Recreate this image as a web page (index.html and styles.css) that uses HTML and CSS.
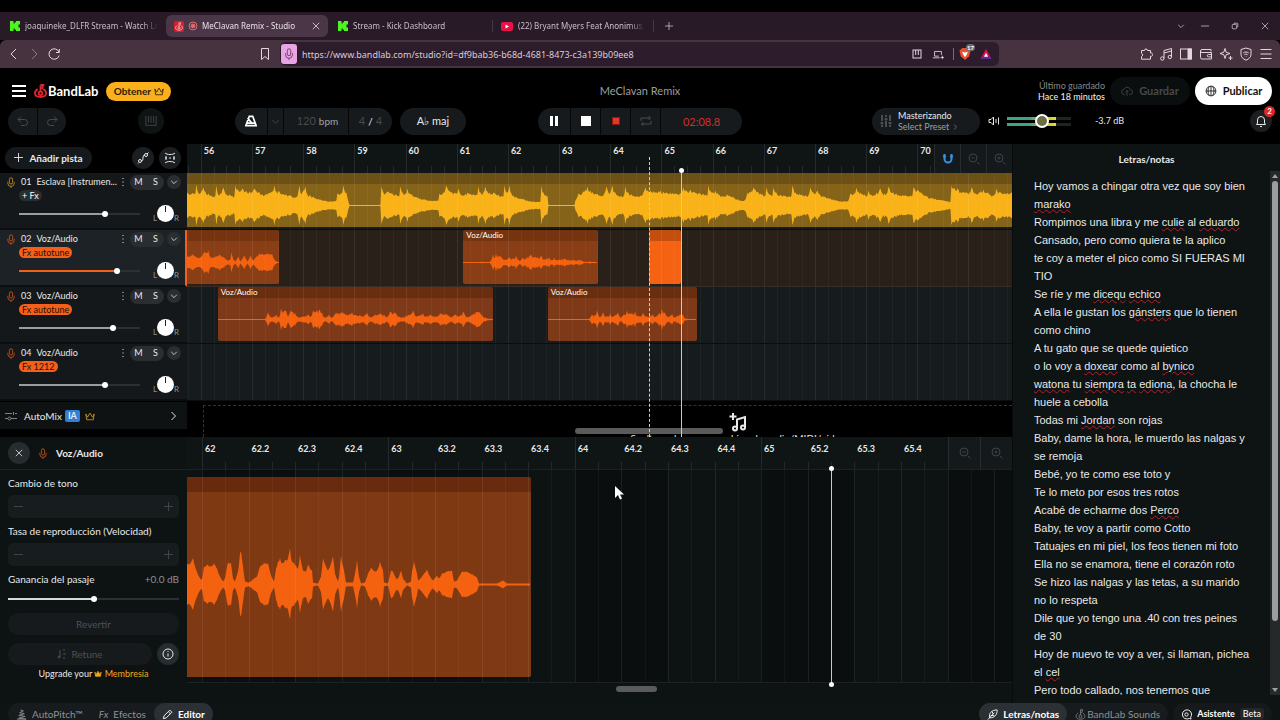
FILE: index.html
```html
<!DOCTYPE html>
<html lang="es">
<head>
    <meta charset="utf-8">
    <title>MeClavan Remix - Studio</title>
    <link rel="stylesheet" href="styles.css">
</head>
<body>
    <!-- shared icons -->
    <svg class="defs" aria-hidden="true">
        <symbol id="i-mic" viewBox="0 0 10 14"><rect x="3" y="1" width="4" height="8" rx="2"/><path d="M1 6v2a4 4 0 0 0 8 0V6M5 12v2"/></symbol>
        <symbol id="i-down" viewBox="0 0 10 10"><path d="M1.500 3.500 5 7l3.500-3.500"/></symbol>
        <symbol id="i-right" viewBox="0 0 10 10"><path d="M3.500 1 7.500 5l-4 4"/></symbol>
        <symbol id="i-dots" viewBox="0 0 4 10"><path d="M2 1v1M2 4.500v1M2 8v1"/></symbol>
        <symbol id="i-plus" viewBox="0 0 10 10"><path d="M5 0v10M0 5h10"/></symbol>
        <symbol id="i-minus" viewBox="0 0 10 10"><path d="M0 5h10"/></symbol>
        <symbol id="i-x" viewBox="0 0 10 10"><path d="M1 1l8 8M9 1 1 9"/></symbol>
        <symbol id="i-zoomout" viewBox="0 0 12 12"><circle cx="5" cy="5" r="4"/><path d="M3.500 5h3M9 9l2.500 2.500"/></symbol>
        <symbol id="i-zoomin" viewBox="0 0 12 12"><circle cx="5" cy="5" r="4"/><path d="M3.500 5h3M5 3.500v3M9 9l2.500 2.500"/></symbol>
        <symbol id="i-crown" viewBox="0 0 12 11"><path d="M1 3l2 4 3-5 3 5 2-4-1 7H2z"/></symbol>
        <symbol id="i-flame" viewBox="0 0 14 15"><path d="M7 1h3L8.500 5.500M7 1v7M4 5.500C2.300 6.500 1 8 1 10c0 2.500 2 4 6 4s6-1.500 6-4c0-2-1.300-3.500-3-4.500"/><circle cx="7" cy="10" r="2"/></symbol>
        <symbol id="i-kick" viewBox="0 0 10 10"><path d="M0 0h3.500v2.500h1.200V1.200H6V0h4v3.500H8.500v3H10V10H6V8.800H4.700V7.500H3.500V10H0z"/></symbol>
    </svg>

    <div class="tabs">
        <div class="tab">
            <svg class="kick"><use href="#i-kick"/></svg>
            <span class="tab-title">joaquineke_DLFR Stream - Watch Liv</span>
        </div>
        <div class="tab active">
            <span class="fav"><svg class="ic"><use href="#i-flame"/></svg></span>
            <svg class="rec" viewBox="0 0 10 10"><circle cx="5" cy="5" r="4"/><circle class="dot" cx="5" cy="5" r="2"/></svg>
            <span class="tab-title">MeClavan Remix - Studio</span>
            <button class="tab-close" aria-label="Cerrar"><svg class="ic"><use href="#i-x"/></svg></button>
        </div>
        <div class="tab">
            <svg class="kick"><use href="#i-kick"/></svg>
            <span class="tab-title">Stream - Kick Dashboard</span>
        </div>
        <div class="tab ruled">
            <svg class="yt" viewBox="0 0 12 9"><rect width="12" height="9" rx="2"/><path d="M4.500 2.500v4l3.500-2z"/></svg>
            <span class="tab-title">(22) Bryant Myers Feat Anonimus, An</span>
        </div>
        <button class="new-tab" aria-label="Nueva"><svg class="ic"><use href="#i-plus"/></svg></button>
        <div class="win">
            <svg class="ic"><use href="#i-down"/></svg>
            <svg class="ic"><use href="#i-minus"/></svg>
            <svg class="ic" viewBox="0 0 10 10"><rect x="1.500" y="3" width="5.500" height="5.500" rx="1"/><path d="M3.500 3V2.500a1 1 0 0 1 1-1h3a1 1 0 0 1 1 1v3a1 1 0 0 1-1 1H7"/></svg>
            <svg class="ic"><use href="#i-x"/></svg>
        </div>
    </div>

    <div class="toolbar">
        <div class="nav">
            <svg viewBox="0 0 14 14"><path d="M9 2 4 7l5 5"/></svg>
            <svg class="off" viewBox="0 0 14 14"><path d="M5 2l5 5-5 5"/></svg>
            <svg viewBox="0 0 14 14"><path d="M12 5A5.200 5.200 0 1 0 12.200 8.500M12.300 2v3.500H9"/></svg>
        </div>
        <svg class="bookmark" viewBox="0 0 10 14"><path d="M1.500 1.500h7v11L5 9.500l-3.500 3z"/></svg>
        <div class="url">
            <span class="mic-badge"><svg><use href="#i-mic"/></svg></span>
            <input type="text" aria-label="Dirección" value="https://www.bandlab.com/studio?id=df9bab36-b68d-4681-8473-c3a139b09ee8">
            <svg viewBox="0 0 12 12"><rect x="2" y="2" width="8" height="8"/><path d="M4.700 2v5M7.300 2v5"/></svg>
            <svg viewBox="0 0 14 12"><path d="M8 8.500H3V3h8v4M1 10.500h8M12 8v4M10 10h4"/></svg>
            <i></i>
            <span class="brave">
                <svg viewBox="0 0 12 13"><path class="lion" d="M3 0h6l3 3-1.500 6L6 13 1.500 9 0 3z"/><path class="face" d="M3 4l3 1 3-1-1 3-2 3-2-3z"/></svg>
                <b>17</b>
            </span>
            <svg class="bat" viewBox="0 0 12 11"><path d="M6 0l6 11H0z"/><path class="low" d="M0 11h12L9 8H3z"/><path class="mid" d="M6 4.500 8.200 8.500H3.800z"/></svg>
        </div>
        <div class="ext">
            <svg viewBox="0 0 14 14"><path d="M3 3.500h2.500a1.500 1.500 0 1 1 3 0h3V6a1.700 1.700 0 1 1 0 3.200v3H2.500V9.500a1.700 1.700 0 0 0 0-3.200V3.500z"/></svg>
            <svg viewBox="0 0 14 14"><path d="M5 11.500V3.500l7.500-2v8.500M5 6l7.500-2"/><circle cx="3.300" cy="11.500" r="1.700"/><circle cx="10.800" cy="10" r="1.700"/></svg>
            <svg viewBox="0 0 14 14"><rect x="1.500" y="2" width="11" height="10"/><path class="solid" d="M9 2h3.500v10H9z"/></svg>
            <svg viewBox="0 0 14 14"><path d="M12 4.500V2.500H3a1.500 1.500 0 0 0 0 3h9.500V12H3a1.500 1.500 0 0 1-1.500-1.500V4M12.500 7.500h-3a1.200 1.200 0 0 0 0 2.400h3"/></svg>
            <svg viewBox="0 0 14 14"><path d="M6 1.500 7.200 5.300 11 6.500 7.200 7.700 6 11.500 4.800 7.700 1 6.500l3.800-1.200zM11.500 9v4M9.500 11h4"/></svg>
            <svg viewBox="0 0 14 14"><path d="M7 1l5 1.500v5c0 2.500-2 4.500-5 5.700-3-1.200-5-3.200-5-5.700v-5zM4.300 6c1.600-1.300 3.800-1.300 5.400 0M5.400 7.700c1-.7 2.200-.7 3.200 0M7 9v.5"/></svg>
            <svg viewBox="0 0 14 14"><path d="M1.500 2.500h11M1.500 7h11M1.500 11.500h11"/></svg>
        </div>
    </div>

    <header class="app-head">
        <div class="row">
            <div class="brand">
                <button class="bare menu" aria-label="Menú"><svg viewBox="0 0 14 12"><path d="M0 1h14M0 6h14M0 11h14"/></svg></button>
                <a class="logo" href="#"><svg><use href="#i-flame"/></svg>BandLab</a>
                <button class="get">Obtener <svg><use href="#i-crown"/></svg></button>
            </div>
            <h1>MeClavan Remix</h1>
            <div class="publish">
                <p class="saved">Último guardado<br><span>Hace 18 minutos</span></p>
                <button class="save" disabled><svg viewBox="0 0 14 12"><path d="M4.500 10H4a3 3 0 0 1-.5-6 4 4 0 0 1 7.500.5A2.700 2.700 0 0 1 10.500 10H9.500M7 11.500v-6M5 7.500l2-2 2 2"/></svg>Guardar</button>
                <button class="pub"><svg viewBox="0 0 14 14"><circle cx="7" cy="7" r="5.700"/><path d="M7 1.300v11.400M1.300 7h11.400M5 1.800c-2 3-2 7.400 0 10.400M9 1.800c2 3 2 7.400 0 10.400"/></svg>Publicar</button>
            </div>
        </div>
        <div class="row">
            <div class="left-tools">
                <div class="pill dim">
                    <button aria-label="Deshacer"><svg viewBox="0 0 12 12"><path d="M4 1.500 1 4.500l3 3M1 4.500h6.500a3 3 0 0 1 0 6H4"/></svg></button>
                    <button aria-label="Rehacer"><svg viewBox="0 0 12 12"><path d="M8 1.500l3 3-3 3M11 4.500H4.500a3 3 0 0 0 0 6H8"/></svg></button>
                </div>
                <button class="round keys dim" aria-label="Teclado"><svg viewBox="0 0 14 12"><path d="M1 0v11h12V0M4 0v8M7 0v8M10 0v8"/></svg></button>
                <div class="tempo">
                    <div class="pill">
                        <button class="metro" aria-label="Metrónomo"><svg viewBox="0 0 14 13"><path d="M5 1h4l4 11H1zM2.500 9h9M8 9 3 3"/></svg></button>
                        <button class="dim thin" aria-label="Opciones"><svg><use href="#i-down"/></svg></button>
                        <button class="bpm"><em>120</em> bpm</button>
                        <button class="sig"><em>4</em> / <em>4</em></button>
                    </div>
                    <button class="pill key">A♭ maj</button>
                </div>
            </div>
            <div class="pill transport">
                <button aria-label="Pausa"><svg class="fill" viewBox="0 0 12 12"><path d="M2 1h3v10H2zM7 1h3v10H7z"/></svg></button>
                <button aria-label="Detener"><svg class="fill" viewBox="0 0 12 12"><path d="M1 1h10v10H1z"/></svg></button>
                <button aria-label="Grabar"><span class="rec-dot"></span></button>
                <button class="dim" aria-label="Bucle"><svg viewBox="0 0 12 12"><path d="M1 6V3h9.500M8.500 1l2 2-2 2M11 6v3H1.500M3.500 7l-2 2 2 2"/></svg></button>
                <output>02:08.8</output>
            </div>
            <div class="right-tools">
                <div class="out">
                    <button class="pill master">
                        <svg viewBox="0 0 12 12"><path d="M2 0v6M2 9.500V12M6 0v2M6 5.500V12M10 0v6M10 9.500V12M.5 8h3M4.500 4h3M8.500 8h3"/></svg>
                        <span>Masterizando<small>Select Preset <svg><use href="#i-right"/></svg></small></span>
                    </button>
                    <svg class="spk" viewBox="0 0 12 10"><path d="M1 3.500h2L5.500 1v8L3 6.500H1zM8 3v4M10.500 1.500v7"/></svg>
                    <input class="meter" type="range" aria-label="Volumen" value="56">
                    <span class="db">-3.7 dB</span>
                </div>
                <button class="round bell" aria-label="Avisos">
                    <svg viewBox="0 0 12 12"><path d="M1.500 9.500h9L9.500 8V5a3.500 3.500 0 0 0-7 0v3zM5 11.500h2"/></svg>
                    <b>2</b>
                </button>
            </div>
        </div>
    </header>

    <main>
        <div class="work">
            <section class="arrange">
                <div class="side">
                    <div class="side-head">
                        <button class="add"><svg><use href="#i-plus"/></svg>Añadir pista</button>
                        <button class="round" aria-label="Automatización"><svg viewBox="0 0 12 12"><circle cx="3" cy="9" r="1.500"/><circle cx="9" cy="3" r="1.500"/><path d="M4.500 9C7 9 5 3 7.500 3M1 11.500l1-1M10 2l1.500-1.500"/></svg></button>
                        <button class="round" aria-label="Ajustar"><svg viewBox="0 0 12 12"><path d="M1 1c2 2 8 2 10 0M1 11c2-2 8-2 10 0M1 6h2M5 6h2M9 6h2M2 4v4M10 4v4"/></svg></button>
                    </div>

                    <div class="track yellow">
                        <div class="line">
                            <svg class="mic"><use href="#i-mic"/></svg><span>01</span><span class="name">Esclava [Instrumen...</span>
                            <svg class="dots"><use href="#i-dots"/></svg>
                            <div class="ms"><button>M</button><button>S</button></div>
                            <button class="round" aria-label="Abrir"><svg><use href="#i-down"/></svg></button>
                        </div>
                        <button class="fx none">+ Fx</button>
                        <div class="line mix"><input type="range" aria-label="Volumen 01" value="72" style="--v: 71%"><span class="pan"><i></i></span></div>
                    </div>

                    <div class="track selected">
                        <div class="line">
                            <svg class="mic"><use href="#i-mic"/></svg><span>02</span><span class="name">Voz/Audio</span>
                            <svg class="dots"><use href="#i-dots"/></svg>
                            <div class="ms"><button>M</button><button>S</button></div>
                            <button class="round" aria-label="Abrir"><svg><use href="#i-down"/></svg></button>
                        </div>
                        <button class="fx">Fx autotune</button>
                        <div class="line mix"><input type="range" aria-label="Volumen 02" value="83" style="--v: 82%"><span class="pan"><i></i></span></div>
                    </div>

                    <div class="track">
                        <div class="line">
                            <svg class="mic"><use href="#i-mic"/></svg><span>03</span><span class="name">Voz/Audio</span>
                            <svg class="dots"><use href="#i-dots"/></svg>
                            <div class="ms"><button>M</button><button>S</button></div>
                            <button class="round" aria-label="Abrir"><svg><use href="#i-down"/></svg></button>
                        </div>
                        <button class="fx">Fx autotune</button>
                        <div class="line mix"><input type="range" aria-label="Volumen 03" value="79" style="--v: 78%"><span class="pan"><i></i></span></div>
                    </div>

                    <div class="track">
                        <div class="line">
                            <svg class="mic"><use href="#i-mic"/></svg><span>04</span><span class="name">Voz/Audio</span>
                            <svg class="dots"><use href="#i-dots"/></svg>
                            <div class="ms"><button>M</button><button>S</button></div>
                            <button class="round" aria-label="Abrir"><svg><use href="#i-down"/></svg></button>
                        </div>
                        <button class="fx">Fx 1212</button>
                        <div class="line mix"><input type="range" aria-label="Volumen 04" value="72" style="--v: 71%"><span class="pan"><i></i></span></div>
                    </div>

                    <button class="automix">
                        <svg class="sliders" viewBox="0 0 12 10"><path d="M0 2.500h7M10 2.500h2M0 7.500h3M6 7.500h6M8.500 1v3"/><circle cx="4.500" cy="7.500" r="1.500"/></svg>
                        AutoMix <b>IA</b>
                        <svg class="gold"><use href="#i-crown"/></svg>
                        <svg class="go"><use href="#i-right"/></svg>
                    </button>
                </div>

                <div class="timeline" id="arrange" data-start="55.73" data-span="16.12">
                    <div class="ruler"></div>
                    <div class="lane"><div class="clip gold" data-from="55" data-to="73" data-wave="beat"></div></div>
                    <div class="lane tinted">
                        <div class="clip" data-from="55" data-to="57.53" data-wave="voiceA"></div>
                        <div class="clip" data-from="61.13" data-to="63.77" data-wave="voiceB"><span>Voz/Audio</span></div>
                        <div class="clip recording" data-from="64.76" data-to="65.38"></div>
                    </div>
                    <div class="lane">
                        <div class="clip dark" data-from="56.33" data-to="61.71" data-wave="voiceC"><span>Voz/Audio</span></div>
                        <div class="clip dark" data-from="62.78" data-to="65.7" data-wave="voiceD"><span>Voz/Audio</span></div>
                    </div>
                    <div class="lane"></div>
                    <div class="drop">
                        <svg viewBox="0 0 18 19"><path d="M4 0v7M.5 3.500h7M8 15V6.500l8-2.500v10.500"/><circle cx="6" cy="15.500" r="2"/><circle cx="14" cy="14.500" r="2"/></svg>
                        <p>Suelta un loop o un archivo de audio/MIDI/video</p>
                    </div>
                    <div class="tools">
                        <button class="on" aria-label="Imán"><svg viewBox="0 0 12 12"><path d="M2.500 1v5a3.500 3.500 0 0 0 7 0V1M1 3.500h3M8 3.500h3"/></svg></button>
                        <button aria-label="Alejar"><svg><use href="#i-zoomout"/></svg></button>
                        <button aria-label="Acercar"><svg><use href="#i-zoomin"/></svg></button>
                    </div>
                    <div class="hscroll"></div>
                    <div class="mark" data-from="64.76"></div>
                    <div class="playhead" data-from="65.38"></div>
                </div>
            </section>

            <section class="editor">
                <div class="side">
                    <div class="editor-head">
                        <button class="round" aria-label="Cerrar"><svg><use href="#i-x"/></svg></button>
                        <svg class="mic"><use href="#i-mic"/></svg>
                        <h2>Voz/Audio</h2>
                    </div>
                    <div class="form">
                        <h3>Cambio de tono</h3>
                        <div class="stepper"><button aria-label="Bajar tono" disabled><svg><use href="#i-minus"/></svg></button><button aria-label="Subir tono" disabled><svg><use href="#i-plus"/></svg></button></div>
                        <h3>Tasa de reproducción (Velocidad)</h3>
                        <div class="stepper"><button aria-label="Menos velocidad" disabled><svg><use href="#i-minus"/></svg></button><button aria-label="Más velocidad" disabled><svg><use href="#i-plus"/></svg></button></div>
                        <label for="gain">Ganancia del pasaje <span>+0.0 dB</span></label>
                        <input type="range" id="gain" value="50" style="--v: 50%">
                        <button class="wide" disabled>Revertir</button>
                        <div class="retune">
                            <button class="wide" disabled><svg viewBox="0 0 10 10"><path d="M3 1v7M6 1h2M6 5h3M6 9h2"/><circle cx="2" cy="8" r="1"/></svg>Retune</button>
                            <button class="round" aria-label="Información"><svg viewBox="0 0 12 12"><circle cx="6" cy="6" r="5"/><path d="M6 5.500v3M6 3v1"/></svg></button>
                        </div>
                        <p class="upgrade">Upgrade your <svg><use href="#i-crown"/></svg> <a href="#">Membresía</a></p>
                    </div>
                </div>
                <div class="timeline" id="editor" data-start="61.92" data-span="4.426">
                    <div class="ruler"></div>
                    <div class="region"><div class="clip" data-from="61.7" data-to="63.768" data-wave="zoomed"></div></div>
                    <div class="tools">
                        <button aria-label="Alejar"><svg><use href="#i-zoomout"/></svg></button>
                        <button aria-label="Acercar"><svg><use href="#i-zoomin"/></svg></button>
                    </div>
                    <div class="playhead" data-from="65.375"></div>
                    <div class="hscroll"></div>
                </div>
            </section>
        </div>

        <aside>
            <h2>Letras/notas</h2>
            <div class="notes">
                <div class="lyrics" contenteditable="true" spellcheck="false" role="textbox" aria-multiline="true" aria-label="Letras/notas">
                    <p>Hoy vamos a chingar otra vez que soy bien</p>
                    <p><u>marako</u></p>
                    <p>Rompimos una libra y me <u>culie</u> al <u>eduardo</u></p>
                    <p>Cansado, pero como quiera te la aplico</p>
                    <p>te coy a meter el pico como SI FUERAS MI</p>
                    <p>TIO</p>
                    <p>Se ríe y me <u>dicequ</u> <u>echico</u></p>
                    <p>A ella le gustan los <u>gánsters</u> que lo tienen</p>
                    <p>como chino</p>
                    <p>A tu gato que se quede quietico</p>
                    <p>o lo voy a <u>doxear</u> como al <u>bynico</u></p>
                    <p><u>watona</u> tu <u>siempra</u> <u>ta</u> <u>ediona</u>, la chocha le</p>
                    <p>huele a cebolla</p>
                    <p>Todas mi <u>Jordan</u> son rojas</p>
                    <p>Baby, dame la hora, le muerdo las nalgas y</p>
                    <p>se remoja</p>
                    <p>Bebé, yo te como ese toto y</p>
                    <p>Te lo meto por esos tres rotos</p>
                    <p>Acabé de echarme dos <u>Perco</u></p>
                    <p>Baby, te voy a partir como Cotto</p>
                    <p>Tatuajes en mi piel, los feos tienen mi foto</p>
                    <p>Ella no se enamora, tiene el corazón roto</p>
                    <p>Se hizo las nalgas y las tetas, a su marido</p>
                    <p>no lo respeta</p>
                    <p>Dile que yo tengo una .40 con tres peines</p>
                    <p>de 30</p>
                    <p>Hoy de nuevo te voy a ver, si llaman, pichea</p>
                    <p>el <u>cel</u></p>
                    <p>Pero todo callado, nos tenemos que</p>
                </div>
                <div class="vscroll">
                    <svg viewBox="0 0 10 10"><path d="M5 3l3 4H2z"/></svg>
                    <div class="thumb"></div>
                    <svg viewBox="0 0 10 10"><path d="M5 7l3-4H2z"/></svg>
                </div>
            </div>
        </aside>
    </main>

    <footer>
        <div class="group">
            <button><svg viewBox="0 0 12 12"><path d="M5 1l3 1-4 2 5 1-6 2 7 1-7 2 8 1H1"/></svg>AutoPitch™</button>
            <button><i>Fx</i>Efectos</button>
            <button class="current"><svg viewBox="0 0 12 12"><path d="M1.500 10.500l.7-3L8.500 1.200l2.300 2.300-6.300 6.300zM7 3l2 2"/></svg>Editor</button>
        </div>
        <div class="group last">
            <button class="current"><svg viewBox="0 0 12 12"><path d="M1 11.500 8 4M3 9.500C1.500 5 5 1 11 1c.5 5-3 9-8 8.500M4 7h4M6 5V3"/></svg>Letras/notas</button>
            <button class="sounds"><svg><use href="#i-flame"/></svg>BandLab Sounds</button>
        </div>
        <button class="assist"><svg viewBox="0 0 12 12"><path d="M10.500 9A5 5 0 1 0 9 10.300L11 11z"/><circle cx="6" cy="6" r="1.800"/></svg>Asistente <small>Beta</small></button>
    </footer>

    <svg class="cursor" viewBox="0 0 10 14"><path d="M1 0v12l3-3 2 4.500 2-1L6 8.500h4z"/></svg>

    <script src="script.js"></script>
</body>
</html>
```
FILE: styles.css
```css
* {
    box-sizing: border-box;
}

body {
    display: flex;
    flex-direction: column;
    height: 100vh;
    margin: 0;
    padding-top: 12px;
    overflow: hidden;
    background: #000;
    color: #e8eaea;
    font-family: Lato, "Liberation Sans", sans-serif;
    font-size: 10px;
    line-height: 14px;
}

h1, h2, h3, p {
    margin: 0;
    font-weight: normal;
}

button {
    display: flex;
    align-items: center;
    justify-content: center;
    margin: 0;
    padding: 0;
    border: 0;
    background: none;
    color: inherit;
    font: inherit;
    white-space: nowrap;
}

svg {
    flex: none;
    width: 12px;
    height: 12px;
    fill: none;
    stroke: currentColor;
}

.defs {
    position: absolute;
    width: 0;
    height: 0;
}

a {
    color: inherit;
    text-decoration: none;
}

/* browser tabs */
.tabs {
    display: flex;
    flex: none;
    align-items: center;
    height: 28px;
    background: #291a27;
    color: #cbbcc8;
    font-family: "Noto Sans", "Liberation Sans", sans-serif;
}

.tab {
    display: flex;
    align-items: center;
    gap: 5px;
    width: 162px;
    height: 22px;
    padding: 0 8px;
    border-radius: 6px;
}

.tab:first-child {
    width: 166px;
    padding-left: 10px;
}

.tab.active {
    gap: 4px;
    margin-right: 2px;
    background: #4b3647;
    color: #eadfe8;
}

.tab.ruled {
    padding-left: 8px;
    border-left: 1px solid #47364a;
    border-right: 1px solid #47364a;
    border-radius: 0;
    height: 12px;
}

.tab-title {
    flex: 1;
    overflow: hidden;
    font-size: 8px;
    white-space: nowrap;
    -webkit-mask-image: linear-gradient(90deg, #000 88%, transparent);
}

.kick {
    width: 10px;
    height: 10px;
    fill: #4cf51f;
    stroke: none;
}

.fav {
    display: flex;
    padding: 1px;
    border-radius: 2px;
    background: #d3202c;
    color: #fff;
}

.fav .ic {
    width: 8px;
    height: 9px;
}

.rec {
    width: 10px;
    height: 10px;
    color: #e0686a;
}

.rec .dot {
    fill: currentColor;
}

.yt {
    height: 9px;
    stroke: none;
    fill: #e5134a;
}

.yt path {
    fill: #fff;
}

.tab-close .ic, .new-tab .ic, .win .ic {
    width: 8px;
    height: 8px;
}

.new-tab {
    padding: 0 11px;
}

.win {
    display: flex;
    gap: 22px;
    margin-left: auto;
    padding-right: 11px;
}

.win .ic:first-child {
    margin-right: -6px;
}

.toolbar {
    display: flex;
    flex: none;
    align-items: center;
    height: 28px;
    padding: 0 7px;
    border-radius: 6px 6px 0 0;
    background: #47333f;
    color: #e4d6e1;
}

.toolbar svg {
    width: 14px;
    height: 14px;
}

.nav {
    display: flex;
    gap: 6px;
}

.nav .off {
    color: #8b7787;
}

.toolbar .bookmark {
    width: 10px;
    margin-left: 199px;
}

.url {
    display: flex;
    flex: 1;
    align-items: center;
    gap: 9px;
    height: 24px;
    margin-left: 10px;
    padding-right: 7px;
    border-radius: 6px;
    background: #2d1c2b;
}

.url svg {
    width: 12px;
    height: 12px;
}

.mic-badge {
    display: flex;
    padding: 4px 2px;
    margin: 0 -4px 0 1px;
    border-radius: 3px;
    background: #e9a4e4;
    color: #5e3a5d;
}

.url input {
    flex: 1;
    min-width: 0;
    padding: 0;
    border: 0;
    background: none;
    color: #d9cbd7;
    font-family: "Noto Sans", "Liberation Sans", sans-serif;
    font-size: 9px;
}

.url i {
    width: 1px;
    height: 12px;
    background: #7b6878;
}

.brave {
    position: relative;
    display: flex;
    margin-left: -4px;
}

.brave .lion {
    fill: #e8502f;
    stroke: none;
}

.brave .face {
    fill: #fff;
    stroke: none;
}

.brave b {
    position: absolute;
    top: -4px;
    left: 7px;
    padding: 0 1px;
    border-radius: 4px;
    background: #6a6a6f;
    color: #fff;
    font-size: 6px;
    line-height: 7px;
}

.url .bat {
    height: 10px;
    fill: #e5134a;
    stroke: none;
}

.bat .low {
    fill: #5b2a9a;
}

.bat .mid {
    fill: #fff;
}

.ext {
    display: flex;
    gap: 6px;
    margin-left: 140px;
}

.ext .solid {
    fill: currentColor;
}

/* studio header */
.app-head {
    flex: none;
    padding: 8px;
}

.row {
    display: grid;
    grid-template-columns: 1fr auto 1fr;
    align-items: center;
    height: 30px;
}

.row h1 {
    color: #9a9e9f;
    font-size: 11px;
}

.brand, .publish {
    display: flex;
    align-items: center;
}

.menu svg {
    width: 14px;
    margin-left: 4px;
    stroke-width: 2;
    color: #fff;
}

.logo {
    display: flex;
    align-items: center;
    gap: 1px;
    margin: 0 8px 0 8px;
    color: #fff;
    font-size: 13px;
    font-weight: bold;
}

.logo svg {
    width: 13px;
    height: 14px;
    stroke-width: 2;
    color: #d8262c;
}

.get {
    gap: 3px;
    width: 65px;
    height: 19px;
    border-radius: 10px;
    background: #f9b01c;
    color: #2c2003;
    font-weight: bold;
}

.get svg {
    width: 10px;
    height: 10px;
}

.publish {
    justify-content: flex-end;
    gap: 5px;
}

.saved {
    color: #85898a;
    font-size: 9px;
    line-height: 11px;
    text-align: right;
}

.saved span {
    color: #f2f2f2;
}

.save, .pub {
    gap: 6px;
    width: 80px;
    height: 28px;
    border-radius: 14px;
    background: #0b0e0f;
    color: #45494b;
    font-size: 11px;
    font-weight: bold;
}

.pub {
    width: 77px;
    background: #fff;
    color: #111;
}

.left-tools, .right-tools, .tempo, .out {
    display: flex;
    align-items: center;
}

.left-tools, .right-tools {
    justify-content: space-between;
}

.left-tools {
    padding-right: 72px;
}

.right-tools {
    padding-left: 130px;
}

.tempo {
    gap: 8px;
}

.pill {
    display: flex;
    align-items: stretch;
    height: 27px;
    border-radius: 14px;
    background: #161a1c;
}

.pill button {
    width: 29px;
}

.pill button + button:not(.bpm), .pill output {
    border-left: 1px solid #050606;
}

.dim, .pill .dim {
    color: #474c4e;
}

.round {
    width: 22px;
    height: 22px;
    border-radius: 50%;
    background: #1b1f22;
}

.round.keys {
    width: 26px;
    height: 26px;
    background: #101314;
}

.pill .metro {
    width: 32px;
    color: #fff;
}

.metro svg {
    stroke-width: 2;
}

.pill .thin {
    width: 16px;
    border: 0;
}

.thin svg {
    width: 9px;
    height: 9px;
}

.pill .bpm {
    width: 65px;
    border-left: 1px solid #050606;
    color: #a0a4a5;
}

.pill .sig {
    width: 44px;
}

.pill em {
    padding: 0 3px;
    color: #474c4e;
    font-style: normal;
    font-size: 11px;
}

.key {
    align-items: center;
    width: 66px;
    font-size: 11px;
}

.transport button {
    width: 30px;
    color: #fff;
}

.transport button:first-child {
    width: 32px;
}

.transport svg.fill {
    fill: currentColor;
    stroke: none;
}

.rec-dot {
    width: 8px;
    height: 8px;
    border: 1px solid #8a1c16;
    background: #e5332a;
}

.transport output {
    width: 82px;
    color: #d32f2f;
    font-size: 11px;
    line-height: 27px;
    text-align: center;
}

.master {
    align-items: center;
    gap: 6px;
    width: 108px;
    margin-right: 8px;
    justify-content: flex-start;
    padding-left: 8px;
    text-align: left;
    font-size: 9px;
    line-height: 11px;
}

.master > svg {
    color: #7c8183;
}

.master small {
    display: block;
    color: #9a9fa1;
    font-size: 9px;
}

.master small svg {
    width: 6px;
    height: 6px;
}

.spk {
    height: 10px;
}

.db {
    margin-left: 24px;
    font-size: 9px;
}

.bell {
    position: relative;
}

.bell b {
    position: absolute;
    top: -4px;
    right: -3px;
    width: 11px;
    height: 11px;
    border-radius: 50%;
    background: #dc2626;
    font-size: 8px;
    line-height: 11px;
    color: #fff;
}

/* sliders */
input[type=range] {
    -webkit-appearance: none;
    appearance: none;
    height: 8px;
    margin: 0;
    background: linear-gradient(90deg, var(--fill, #9a9ea0) var(--v), #2b3032 var(--v)) center / 100% 2px no-repeat;
}

input[type=range]::-webkit-slider-thumb {
    -webkit-appearance: none;
    width: 6px;
    height: 6px;
    border-radius: 50%;
    background: #fff;
}

input.meter {
    width: 64px;
    height: 9px;
    margin-left: 7px;
    background:
        linear-gradient(#000, #000) center / 100% 3px no-repeat,
        linear-gradient(90deg, #3fa384 0 35%, #c9c831 62%, #e8dc2c 76%, #202324 76%);
}

input.meter::-webkit-slider-thumb {
    width: 14px;
    height: 14px;
    border: 2px solid #fff;
    background: #6b6e43;
}

/* workspace */
main {
    display: flex;
    flex: 1;
    min-height: 0;
}

.work {
    display: flex;
    flex: 1;
    flex-direction: column;
    min-width: 0;
}

.arrange, .editor {
    display: grid;
    grid-template-columns: 187px 1fr;
}

.arrange {
    flex: none;
    height: 293px;
}

.editor {
    flex: 1;
    min-height: 0;
    background: #0d1213;
}

.side-head {
    display: flex;
    align-items: center;
    gap: 5px;
    height: 29px;
    padding: 0 6px 2px 5px;
}

.side-head .add {
    gap: 6px;
    width: 87px;
    height: 22px;
    margin-right: auto;
    border-radius: 11px;
    background: #15191b;
    font-size: 10px;
    font-weight: bold;
}

.add svg {
    width: 9px;
    height: 9px;
}

.track {
    height: 57px;
    padding: 1px 6px 0;
    border-bottom: 2px solid #0b0e0f;
    background: #14181a;
    font-size: 9px;
}

.track.selected {
    --fill: #f4601a;
    border-right: 2px solid #f4601a;
    padding-right: 4px;
    background: #1c2225;
}

.line {
    display: flex;
    align-items: center;
    height: 16px;
}

.mic {
    width: 10px;
    height: 11px;
    color: #e2571a;
}

.yellow .mic {
    color: #d19a1c;
}

.line .mic {
    margin-right: 5px;
}

.line .name {
    flex: 1;
    margin-left: 5px;
    overflow: hidden;
    text-overflow: ellipsis;
    white-space: nowrap;
}

.dots {
    width: 4px;
    height: 10px;
    margin: 0 5px 0 3px;
}

.ms {
    display: flex;
    width: 34px;
    height: 15px;
    border-radius: 8px;
    background: #2a2e31;
}

.ms button {
    flex: 1;
}

.line .round {
    width: 14px;
    height: 14px;
    margin-left: 3px;
    background: #2a2e31;
}

.line .round svg {
    width: 8px;
    height: 8px;
}

.fx {
    height: 11px;
    margin-left: 13px;
    padding: 0 3px;
    border-radius: 6px;
    background: #f4601a;
    color: #2a1003;
}

.fx.none {
    background: #2a2e31;
    color: #fff;
}

.mix {
    height: 17px;
    margin-top: 4px;
    padding-left: 13px;
}

.mix input {
    flex: 1;
    min-width: 0;
}

.pan {
    display: flex;
    align-items: flex-end;
    margin: 0 2px 0 13px;
    color: #8a8f91;
    font-size: 8px;
    line-height: 8px;
}

.pan::before {
    content: "L";
}

.pan::after {
    content: "R";
}

.pan i {
    width: 17px;
    height: 17px;
    border-radius: 50%;
    background: linear-gradient(#222, #222) center 1px / 1px 6px no-repeat, #fff;
}

.automix {
    gap: 5px;
    justify-content: flex-start;
    width: 100%;
    height: 27px;
    margin-top: 1px;
    padding: 0 9px 0 5px;
    background: #0e1213;
}

.automix svg {
    width: 10px;
    height: 10px;
}

.automix .sliders {
    width: 12px;
    margin-right: 2px;
    color: #7f8486;
}

.automix b {
    padding: 0 3px;
    margin-left: -2px;
    border-radius: 2px;
    background: #2f80d8;
    font-size: 9px;
    line-height: 12px;
}

.automix .gold {
    color: #d99a1c;
}

.automix .go {
    margin-left: auto;
}

/* timelines */
.timeline {
    position: relative;
    display: flex;
    flex-direction: column;
    min-width: 0;
    overflow: hidden;
}

.ruler {
    position: relative;
    flex: none;
    height: 29px;
    background: #0f1415;
}

.ruler span {
    position: absolute;
    top: 0;
    padding-left: 3px;
    font-size: 9px;
    font-weight: bold;
}

.ruler i, .lane > i, .region > i {
    position: absolute;
    bottom: 0;
    width: 1px;
    height: 7px;
    background: #24292b;
}

.ruler i.bar {
    height: 100%;
}

.lane > i, .region > i {
    height: 100%;
    background: rgba(255, 255, 255, 0.04);
}

.lane > i.bar, .region > i.bar {
    background: rgba(255, 255, 255, 0.08);
}

.lane {
    position: relative;
    flex: none;
    height: 57px;
    border-bottom: 1px solid #0b0e0f;
    background: #161b1e;
}

.lane.tinted {
    border-bottom-color: #3a2c22;
    background: #2a201a;
}

.clip {
    --head: #75330f;
    --body: #8a3e16;
    position: absolute;
    top: 0;
    height: 54px;
    padding-top: 11px;
    border-radius: 2px;
    overflow: hidden;
    background: linear-gradient(var(--head) 11px, var(--body) 11px);
    color: #f4620f;
}

.clip.gold {
    --head: #6c5015;
    --body: #856419;
    color: #f9b318;
}

.clip.dark {
    --head: #692e10;
    --body: #7e3a18;
}

.clip.recording {
    --head: #c44e0d;
    --body: #f46212;
}

.clip span {
    position: absolute;
    top: 0;
    left: 3px;
    color: #fff;
    font-size: 8px;
    line-height: 10px;
}

.clip svg {
    display: block;
    width: 100%;
    height: 100%;
    fill: currentColor;
    stroke: none;
}

.drop {
    display: flex;
    flex: 1;
    flex-direction: column;
    align-items: center;
    gap: 1px;
    min-height: 0;
    margin: 4px 0 0 16px;
    padding-left: 260px;
    overflow: hidden;
    border: 1px dashed #333;
    border-width: 1px 0 0 1px;
}

.drop svg {
    width: 18px;
    height: 19px;
    margin-top: 7px;
    stroke-width: 2;
}

.drop p {
    flex: none;
    line-height: 10px;
    white-space: nowrap;
}

.tools {
    position: absolute;
    top: 0;
    right: 0;
    display: flex;
    height: 29px;
    background: #14191b;
    color: #3f4446;
}

.tools button {
    width: 26px;
    border-left: 1px solid #262b2d;
}

.tools .on {
    color: #3a8fe0;
}

.tools .on svg {
    stroke-width: 2;
}

.hscroll {
    position: absolute;
    bottom: 3px;
    left: 47%;
    width: 18%;
    height: 6px;
    border-radius: 3px;
    background: #5a5c5c;
}

.mark, .playhead {
    position: absolute;
    z-index: 2;
    top: 13px;
    bottom: 0;
    border-left: 1px dashed #d0d0d0;
}

.playhead {
    top: 26px;
    border-left: 1px solid #c8caca;
}

.playhead::before, #editor .playhead::after {
    content: "";
    position: absolute;
    top: -2px;
    left: -3px;
    width: 5px;
    height: 5px;
    border-radius: 50%;
    background: #fff;
}

#editor .ruler {
    height: 33px;
    border-bottom: 1px solid #1c2224;
}

#editor .ruler span {
    top: 5px;
}

#editor .region {
    position: relative;
    flex: 1;
    margin-bottom: 19px;
    border-bottom: 1px solid #1c2224;
}

.region .band {
    position: absolute;
    top: 0;
    bottom: 0;
    background: rgba(0, 0, 0, 0.2);
}

#editor .clip {
    --head: rgba(108, 44, 13, 0.95);
    --body: rgba(136, 61, 20, 0.92);
    top: 7px;
    bottom: 5px;
    height: auto;
    padding-top: 15px;
    background: linear-gradient(var(--head) 15px, var(--body) 15px);
}

#editor .tools {
    height: 32px;
}

#editor .tools button {
    width: 32px;
}

#editor .playhead {
    top: 31px;
    bottom: 17px;
}

#editor .playhead::after {
    top: auto;
    bottom: -2px;
}

#editor .hscroll {
    bottom: 10px;
    left: 52%;
    width: 5%;
}

/* region editor form */
.editor-head {
    display: flex;
    align-items: center;
    height: 33px;
    padding-left: 8px;
    border-bottom: 1px solid #1c2224;
}

.editor-head .round, .retune .round {
    background: #272c2f;
}

.editor-head .round svg {
    width: 8px;
    height: 8px;
}

.editor-head .mic {
    margin: 0 8px;
}

.editor-head h2 {
    font-size: 10px;
    font-weight: bold;
}

.form {
    padding: 6px 8px 0;
}

.form h3, .form label {
    display: block;
    font-size: 10px;
}

.form label {
    display: flex;
    justify-content: space-between;
}

.form label span {
    color: #8c9193;
}

.stepper {
    display: flex;
    justify-content: space-between;
    height: 23px;
    margin: 5px 0 6px;
    padding: 0 6px;
    border-radius: 5px;
    background: #171c1e;
    color: #43484a;
}

.stepper svg {
    width: 9px;
    height: 9px;
}

#gain {
    display: block;
    width: 100%;
    margin: 9px 0 10px;
    --fill: #d8dada;
}

.wide {
    gap: 4px;
    width: 100%;
    height: 22px;
    border-radius: 11px;
    background: #161a1c;
    color: #4c5153;
}

.wide svg {
    width: 10px;
    height: 10px;
}

.retune {
    display: flex;
    gap: 5px;
    margin-top: 8px;
}

.retune .wide {
    flex: 1;
}

.upgrade {
    margin-top: 2px;
    font-size: 9px;
    text-align: center;
}

.upgrade svg {
    width: 8px;
    height: 7px;
    fill: #f3a81c;
    stroke: #f3a81c;
}

.upgrade a {
    color: #f3a81c;
}

/* lyrics */
aside {
    display: flex;
    flex: none;
    flex-direction: column;
    width: 268px;
    border-left: 1px solid #080a0b;
    background: #0e1314;
}

aside h2 {
    height: 27px;
    font-size: 10px;
    font-weight: bold;
    line-height: 30px;
    text-align: center;
}

.notes {
    display: flex;
    flex: 1;
    min-height: 0;
    margin-bottom: 7px;
}

.lyrics {
    flex: 1;
    padding: 6px 0 0 21px;
    overflow: hidden;
    font-family: "Liberation Sans", sans-serif;
    font-size: 11px;
    line-height: 18px;
    white-space: nowrap;
}

.lyrics u {
    text-decoration: underline wavy #b3202c 1px;
}

.vscroll {
    display: flex;
    flex-direction: column;
    align-items: center;
    width: 10px;
    background: #26292a;
}

.vscroll svg {
    width: 10px;
    height: 10px;
    stroke: none;
    fill: #9fa1a1;
}

.thumb {
    width: 6px;
    height: 84%;
    margin-bottom: auto;
    border-radius: 3px;
    background: #9c9e9e;
}

/* bottom bar */
footer {
    display: flex;
    flex: none;
    align-items: flex-start;
    height: 18px;
    padding: 1px 8px 0;
    background: #0e1314;
    color: #8d9294;
    font-size: 10px;
}

.group {
    display: flex;
    flex: none;
    height: 22px;
    border-radius: 11px;
    background: #171b1e;
}

footer button {
    flex: none;
    gap: 5px;
    height: 22px;
    padding: 0 8px;
}

footer .current {
    border-radius: 11px;
    background: #2b3034;
    color: #fff;
    font-weight: bold;
}

footer svg {
    width: 11px;
    height: 11px;
}

.last {
    margin: 0 5px 0 auto;
}

footer .sounds {
    gap: 1px;
}

.assist {
    border-radius: 11px;
    background: #15191b;
    color: #fff;
    font-size: 9px;
    font-weight: bold;
}

.assist small {
    padding: 0 3px;
    border-radius: 3px;
    background: #22272a;
    font-size: 9px;
    font-weight: normal;
    line-height: 12px;
}

.cursor {
    position: absolute;
    top: 486px;
    left: 614px;
    z-index: 3;
    width: 10px;
    height: 14px;
    fill: #fff;
    stroke: none;
}
```
FILE: script.js
```js
// Wave envelopes: "x:amplitude" points. from is the bar where x = 0,
// px is how many x units fit in one bar, half is half the drawing height.
// rough sets how uneven the edge is.
const waves = {
    beat: {
        from: 55.73, px: 51.17, half: 21.5, rough: 0.2,
        points: "0:13 8:12 9:21 10:15 14:14 16:18 18:14 24:10 28:10 29:20 30:13 33:12 36:18 38:12 42:11 47:9 48:20 49:16 55:17 62:14 67:17 75:11 85:14 87:20 88:15 92:14 103:10 110:9 112:20 113:13 115:13 118:19 120:11 123:10 133:6 143:4 149:5 150:12 155:13 156:20 157:15 159:13 162:0 193:0 194:19 196:13 200:14 212:10 213:19 215:13 218:12 220:17 222:12 224:11 233:7 246:5 251:5 252:12 256:13 259:20 261:15 270:12 271:17 273:11 275:10 280:13 290:11 291:19 293:13 296:13 298:19 300:14 306:13 316:9 317:20 319:13 320:13 322:20 324:12 326:10 333:7 346:4 353:4 354:20 356:13 360:10 361:0 387:0 388:5 391:12 396:14 400:19 403:15 416:10 419:19 421:13 423:13 425:20 427:13 428:13 436:9 438:19 440:13 441:13 451:9 456:13 458:18 460:15 463:15 473:15 483:13 493:12 496:18 498:15 503:16 520:10 521:20 524:13 528:15 535:9 540:11 553:5 558:6 560:13 566:18 571:13 578:10 579:18 581:12 585:10 586:18 588:13 601:9 604:10 605:20 608:13 621:10 623:18 626:13 630:15 633:10 643:7 653:4 661:5 663:12 668:13 669:18 673:13 680:10 681:15 686:10 693:17 695:12 700:13 701:19 706:13 718:10 725:10 726:18 731:15 740:9 756:5 763:4 764:20 770:17 776:13 783:13 784:18 788:12 796:16 806:10 809:17 813:13 825:13 900:12"
    },
    voiceA: {
        from: 55.73, px: 51.17, half: 21.5, rough: 0.2,
        points: "0:6 5:8 10:5 15:7 17:11 21:12 23:5 28:6 32:8 37:5 40:2 43:3 44:10 46:3 48:1 51:6 53:1 57:7 60:1 63:7 66:2 69:6 72:9 80:9 85:8 87:3 90:.5 93:.5"
    },
    voiceB: {
        from: 61.13, px: 51.17, half: 21.5, rough: 0.5,
        points: "0:.5 16:.5 18:1 26:.5 28:2 30:8 33:9 38:6 43:3 46:5 50:4 53:7 56:2 60:5 64:6 68:8 73:5 78:7 81:3 86:5 88:2 91:5 96:3 101:4 106:3 111:3 116:3 119:2 122:.5 127:1 135:.5"
    },
    voiceC: {
        from: 56.33, px: 51.17, half: 21.5, rough: 0.4,
        points: "0:.5 47:.5 50:7 54:2 58:5 61:2 63:11 68:9 70:3 73:9 77:7 80:2 85:3 90:5 93:3 95:9 101:10 104:7 107:2 111:5 114:2 118:7 124:8 129:5 134:7 139:4 142:5 145:3 149:7 152:2 157:5 162:6 166:5 169:2 172:8 177:7 181:3 185:2 190:5 195:9 199:3 205:6 208:3 212:5 217:3 222:6 228:6 232:3 237:5 242:4 245:8 249:2 254:5 258:8 262:7 265:3 269:1 276:.5"
    },
    voiceD: {
        from: 62.78, px: 51.17, half: 21.5, rough: 0.5,
        points: "0:.5 41:.5 44:5 46:3 49:9 51:3 55:7 58:3 62:6 65:3 70:7 72:2 76:5 79:9 82:6 87:8 90:3 95:7 98:3 105:5 107:3 111:7 114:11 117:6 120:3 124:6 126:2 129:4 133:6 135:5 137:1 149:.5"
    },
    zoomed: {
        from: 61.92, px: 186.4, half: 92, rough: 0.08,
        points: "0:21 3:21 6:26 8:18 12:8 14:5 15:5 17:18 20:20 23:18 27:21 30:16 33:8 36:3 38:6 40:18 41:22 44:21 46:6 48:3 51:13 53:31 54:33 56:18 58:3 62:2 67:6 70:8 73:18 77:22 81:21 84:9 87:3 89:16 91:23 93:26 95:21 98:24 101:26 103:36 104:26 107:22 111:16 113:29 116:14 119:13 121:20 125:14 126:2 131:1 134:8 136:26 139:18 141:14 143:18 146:28 148:11 151:3 152:8 154:28 157:14 159:2 166:2 168:11 170:24 172:8 174:1 178:2 181:11 184:17 188:13 191:16 193:23 196:14 197:2 201:1 204:14 206:13 209:6 211:6 214:14 216:6 220:1 224:3 225:13 227:23 230:11 231:4 235:8 240:15 243:8 246:4 250:9 252:6 255:11 260:13 265:14 267:3 270:4 275:13 280:13 286:10 290:7 292:1 310:1 316:4 320:1 344:1"
    }
};

// repeatable 0..1 noise
function noise(n) {
    const v = Math.sin(n * 127.1 + 3.7) * 43758.5453;
    return v - Math.floor(v);
}

function drawWave(clip, from, to) {
    const wave = waves[clip.dataset.wave];
    const pts = wave.points.split(" ").map(p => p.split(":").map(Number));
    if (pts[0][0] === 0) {
        pts.unshift([-60, pts[0][1]]);
    }
    const edge = [];
    for (let i = 1; i < pts.length; i++) {
        const [x0, a0] = pts[i - 1];
        const [x1, a1] = pts[i];
        for (let x = x0; x < x1; x++) {
            const a = a0 + (a1 - a0) * (x - x0) / (x1 - x0);
            // keep the listed peaks, thin out the columns between them
            const cut = x === x0 ? 0 : noise(x) * wave.rough * a;
            edge.push([x, Math.max(a - cut, 0.5)]);
        }
    }
    const top = edge.map(([x, a]) => `${x} ${(-a).toFixed(1)}`);
    const bottom = edge.map(([x, a]) => `${x} ${(a * 0.97).toFixed(1)}`).reverse();
    const x = (from - wave.from) * wave.px;
    const w = (to - from) * wave.px;
    clip.insertAdjacentHTML("beforeend",
        `<svg viewBox="${x} ${-wave.half} ${w} ${wave.half * 2}" preserveAspectRatio="none"><path d="M${top.join("L")}L${bottom.join("L")}Z"/></svg>`);
}

function setupTimeline(id, stepsPerBar, labelEvery) {
    const view = document.getElementById(id);
    const start = Number(view.dataset.start);
    const span = Number(view.dataset.span);
    const pos = bar => (bar - start) / span * 100 + "%";
    const ruler = view.querySelector(".ruler");

    view.querySelectorAll("[data-from]").forEach(el => {
        const from = Number(el.dataset.from);
        el.style.left = pos(from);
        if (el.dataset.to) {
            const to = Number(el.dataset.to);
            el.style.width = (to - from) / span * 100 + "%";
            if (el.dataset.wave) drawWave(el, from, to);
        }
    });

    // shade the first half of every bar behind the editor clip
    view.querySelectorAll(".region").forEach(region => {
        for (let bar = Math.ceil(start); bar < start + span; bar++) {
            region.insertAdjacentHTML("afterbegin", `<div class="band" style="left:${pos(bar)};width:${0.5 / span * 100}%"></div>`);
        }
    });

    const first = Math.ceil(start * stepsPerBar);
    const last = Math.floor((start + span) * stepsPerBar);
    for (let s = first; s <= last; s++) {
        const bar = Math.floor(s / stepsPerBar);
        const step = s % stepsPerBar;
        const left = pos(s / stepsPerBar);
        ruler.insertAdjacentHTML("beforeend", `<i class="${step === 0 ? "bar" : ""}" style="left:${left}"></i>`);
        // the last bar's number would sit under the zoom buttons
        if (step % labelEvery === 0 && (s / stepsPerBar - start) / span < 0.91) {
            const text = step === 0 ? bar : bar + "." + (step / labelEvery + 1);
            ruler.insertAdjacentHTML("beforeend", `<span style="left:${left}">${text}</span>`);
        }
        view.querySelectorAll(".lane, .region").forEach(lane => {
            const strong = step % labelEvery === 0 ? "bar" : "";
            lane.insertAdjacentHTML("beforeend", `<i class="${strong}" style="left:${left}"></i>`);
        });
    }
}

setupTimeline("arrange", 4, 4);
setupTimeline("editor", 8, 2);
```
